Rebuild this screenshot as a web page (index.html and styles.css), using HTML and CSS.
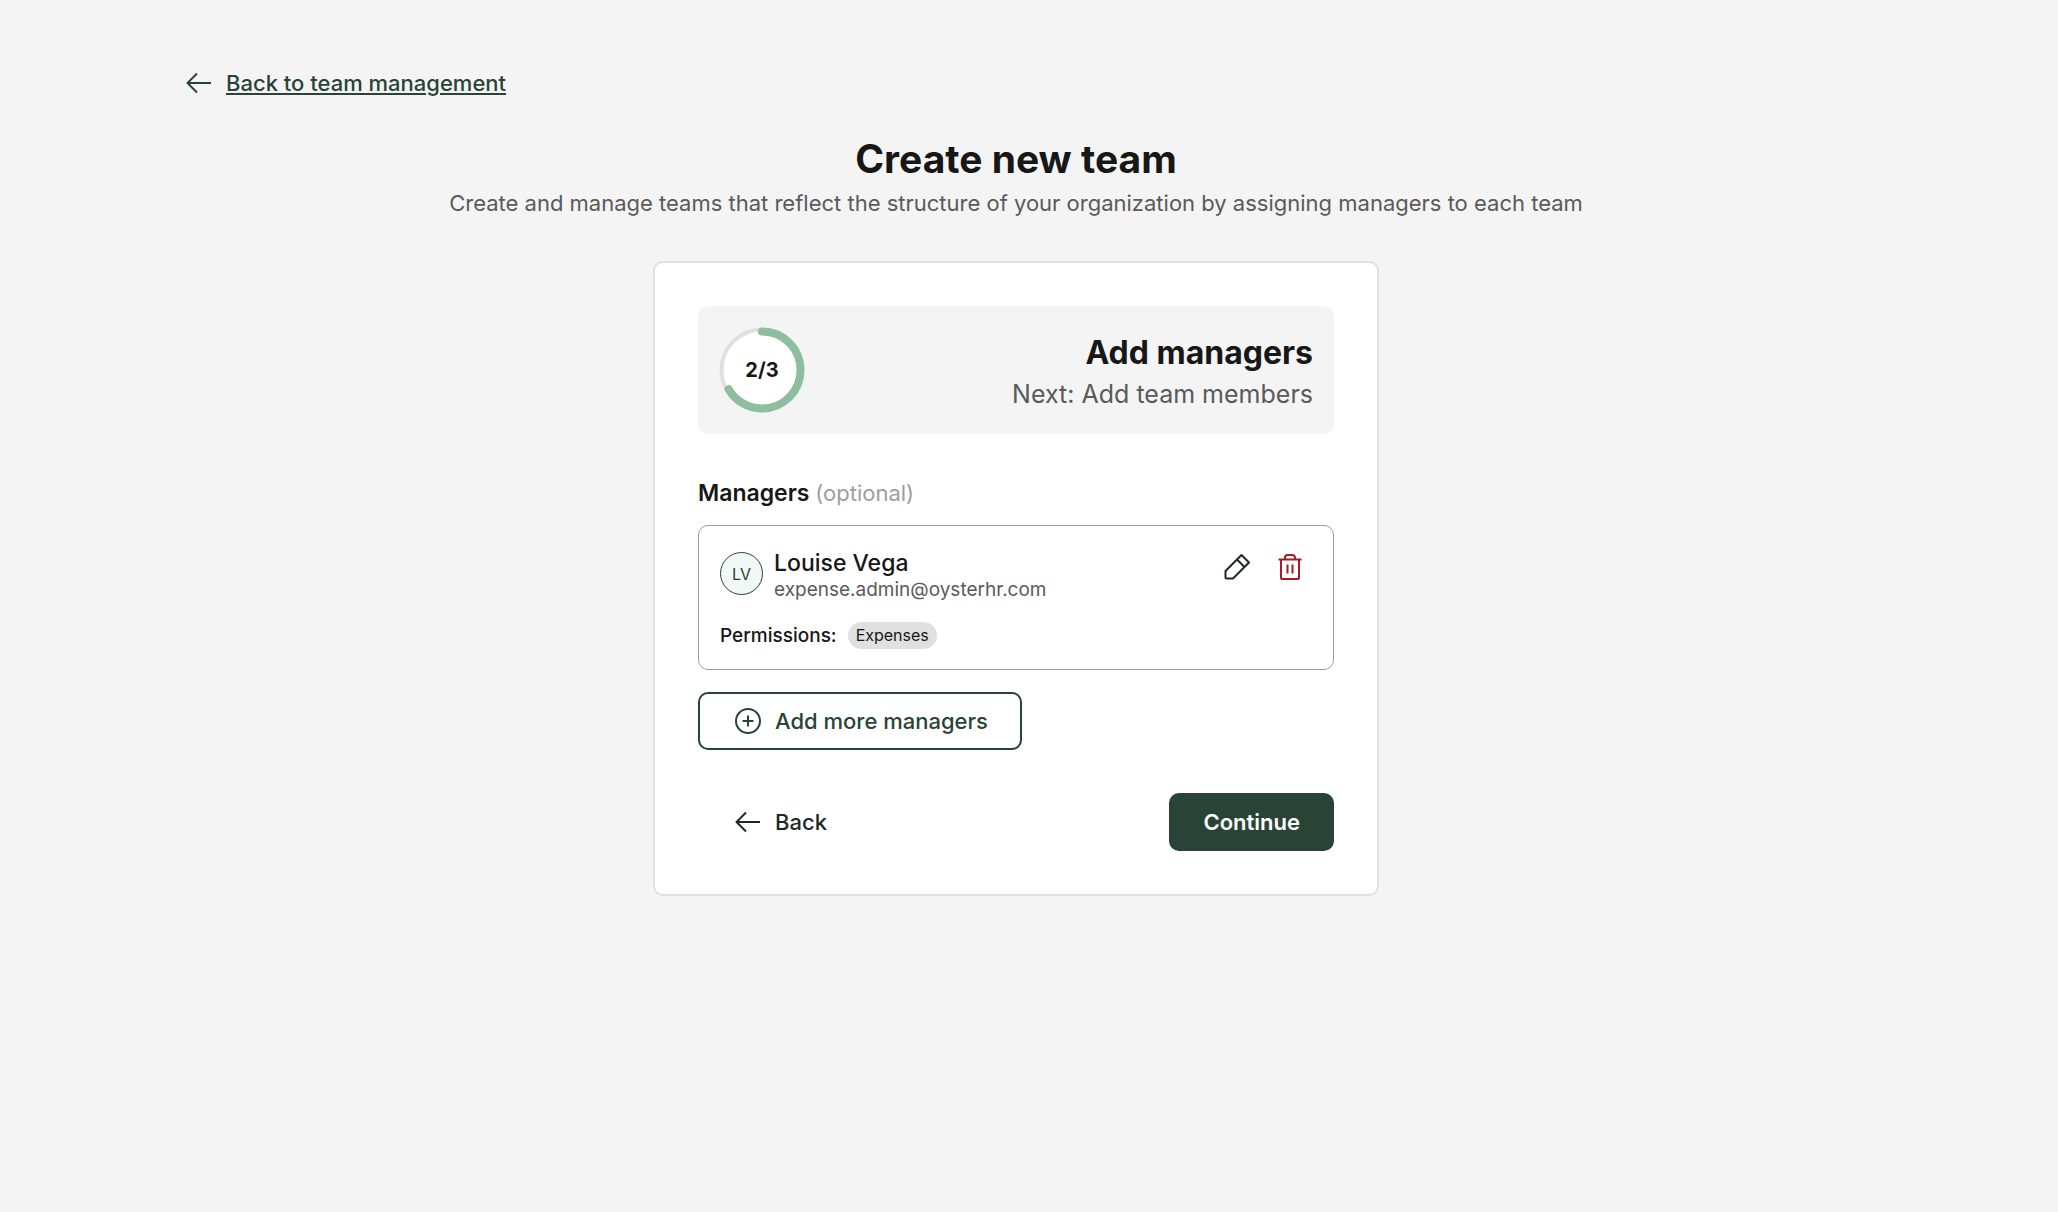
FILE: index.html
```html
<!DOCTYPE html>
<html lang="en">
<head>
<meta charset="utf-8">
<meta name="viewport" content="width=device-width, initial-scale=1">
<title>Create new team</title>
<link rel="stylesheet" href="styles.css">
</head>
<body>
<div class="page">
  <nav class="page-nav">
    <a class="back-link" href="#team-management">
      <svg class="icon" viewBox="0 0 32 32" aria-hidden="true"><path d="M28 16H4.500M14 6.500L4.500 16l9.500 9.500"/></svg>
      <span class="back-link-text">Back to team management</span>
    </a>
  </nav>
  <header class="intro">
    <h1 class="intro-title">Create new team</h1>
    <p class="intro-text">Create and manage teams that reflect the structure of your organization by assigning managers to each team</p>
  </header>
  <main class="card">
    <section class="step">
      <div class="step-ring">
        <svg class="ring" viewBox="0 0 86 86" aria-hidden="true">
          <circle class="ring-track" cx="43" cy="43" r="40.500"/>
          <circle class="ring-value" cx="43" cy="43" r="38.500" pathLength="300" stroke-dasharray="200 300" transform="rotate(-90 43 43)"/>
        </svg>
        <span class="step-count">2/3</span>
      </div>
      <div class="step-text">
        <h2 class="step-title">Add managers</h2>
        <p class="step-next">Next: Add team members</p>
      </div>
    </section>
    <section class="managers">
      <h3 class="managers-label">Managers <span class="optional">(optional)</span></h3>
      <article class="manager">
        <div class="manager-head">
          <span class="avatar">LV</span>
          <div class="manager-id">
            <p class="manager-name">Louise Vega</p>
            <p class="manager-email">expense.admin@oysterhr.com</p>
          </div>
          <div class="manager-actions">
            <button class="icon-button" type="button" aria-label="Edit manager">
              <svg class="icon" viewBox="0 0 32 32" aria-hidden="true"><path d="M20.500 4L28 11.500 12 27.500H5.500a1 1 0 0 1-1-1V20zM16 8.500L23.500 16"/></svg>
            </button>
            <button class="icon-button icon-button-danger" type="button" aria-label="Remove manager">
              <svg class="icon" viewBox="0 0 32 32" aria-hidden="true"><path d="M4.500 8.500h23M7 8.500V27a1 1 0 0 0 1 1h16a1 1 0 0 0 1-1V8.500M11 8.500V6.500a2.500 2.500 0 0 1 2.500-2.500h5A2.500 2.500 0 0 1 21 6.500v2M13.500 13.500v9M18.500 13.500v9"/></svg>
            </button>
          </div>
        </div>
        <div class="permissions">
          <span class="permissions-label">Permissions:</span>
          <span class="tag">Expenses</span>
        </div>
      </article>
      <button class="button button-outline" type="button">
        <svg class="icon" viewBox="0 0 32 32" aria-hidden="true"><circle cx="16" cy="16" r="12"/><path d="M16 10.500v11M10.500 16h11"/></svg>
        Add more managers
      </button>
    </section>
    <div class="card-footer">
      <button class="button button-plain" type="button">
        <svg class="icon" viewBox="0 0 32 32" aria-hidden="true"><path d="M28 16H4.500M14 6.500L4.500 16l9.500 9.500"/></svg>
        Back
      </button>
      <button class="button button-solid" type="button">Continue</button>
    </div>
  </main>
</div>
</body>
</html>
```
FILE: styles.css
```css
* {
  box-sizing: border-box;
}

body {
  margin: 0;
  background: #f4f4f4;
  color: #171717;
  font-family: Inter, "Noto Sans", sans-serif;
}

h1, h2, h3, p {
  margin: 0;
}

button {
  font: inherit;
  cursor: pointer;
}

.page {
  display: flex;
  flex-direction: column;
  padding: 67px 209px 64px 183px;
}

.icon {
  flex: none;
  width: 32px;
  height: 32px;
  fill: none;
  stroke: currentColor;
  stroke-width: 2;
  stroke-linejoin: round;
}

.back-link {
  display: inline-flex;
  align-items: center;
  gap: 11px;
  color: #294436;
  font-size: 22px;
  font-weight: 500;
  line-height: 32px;
  text-decoration: none;
}

.back-link-text {
  text-decoration: underline;
  text-decoration-thickness: 2px;
  text-underline-offset: 2px;
}

.intro {
  margin-top: 28px;
  text-align: center;
}

.intro-title {
  font-size: 39px;
  font-weight: 700;
  line-height: 56px;
}

.intro-text {
  color: #5a5a5a;
  font-size: 22px;
  line-height: 32px;
}

.card {
  display: flex;
  flex-direction: column;
  gap: 43px;
  align-self: center;
  width: 100%;
  max-width: 726px;
  margin-top: 42px;
  padding: 43px;
  border: 2px solid #e0e0e0;
  border-radius: 10px;
  background: #fff;
}

.step {
  display: flex;
  align-items: center;
  justify-content: space-between;
  padding: 21px;
  border-radius: 10px;
  background: #f4f4f4;
}

.step-ring {
  display: grid;
  place-items: center;
}

.ring,
.step-count {
  grid-area: 1 / 1;
}

.ring {
  width: 86px;
  height: 86px;
}

.ring-track {
  fill: #fff;
  stroke: #e0e0e0;
  stroke-width: 4;
}

.ring-value {
  fill: none;
  stroke: #8dbe9e;
  stroke-width: 8;
  stroke-linecap: round;
}

.step-count {
  font-size: 20px;
  font-weight: 700;
}

.step-text {
  padding-top: 3px;
  text-align: right;
}

.step-title {
  font-size: 32px;
  font-weight: 700;
  line-height: 44px;
}

.step-next {
  color: #5a5a5a;
  font-size: 25px;
  line-height: 38px;
}

.managers-label {
  font-size: 23px;
  font-weight: 600;
  line-height: 32px;
}

.optional {
  color: #9e9e9e;
  font-size: 22px;
  font-weight: 400;
}

.manager {
  margin: 16px 0 22px;
  padding: 21px 21px 20px;
  border: 1px solid #9e9e9e;
  border-radius: 10px;
}

.manager-head {
  display: flex;
  align-items: flex-start;
  gap: 11px;
}

.avatar {
  display: flex;
  align-items: center;
  justify-content: center;
  width: 43px;
  height: 43px;
  margin-top: 5px;
  border: 1px solid #294436;
  border-radius: 50%;
  background: #f1f8f6;
  color: #294436;
  font-size: 16px;
}

.manager-id {
  flex: 1;
}

.manager-name {
  font-size: 23px;
  font-weight: 500;
  line-height: 32px;
}

.manager-email {
  color: #5a5a5a;
  font-size: 19px;
  line-height: 22px;
}

.manager-actions {
  display: flex;
  gap: 21px;
  padding: 4px 6px 0 0;
}

.icon-button {
  display: flex;
  padding: 0;
  border: 0;
  background: none;
  color: #1b2a24;
}

.icon-button-danger {
  color: #a11d25;
}

.permissions {
  display: flex;
  align-items: center;
  gap: 11px;
  margin-top: 21px;
}

.permissions-label {
  font-size: 19px;
  font-weight: 500;
  line-height: 27px;
}

.tag {
  padding: 0 8px;
  border-radius: 14px;
  background: #e0e0e0;
  font-size: 16px;
  line-height: 27px;
}

.button {
  display: inline-flex;
  align-items: center;
  gap: 11px;
  padding: 11px 32px;
  border: 2px solid transparent;
  border-radius: 10px;
  background: none;
  font-size: 22px;
  font-weight: 500;
  line-height: 32px;
}

.button-outline {
  border-color: #294436;
  color: #294436;
}

.button-plain {
  color: #1b2a24;
}

.button-solid {
  border-color: #294436;
  background: #294436;
  color: #fff;
  font-weight: 600;
}

.card-footer {
  display: flex;
  align-items: center;
  justify-content: space-between;
}
```
